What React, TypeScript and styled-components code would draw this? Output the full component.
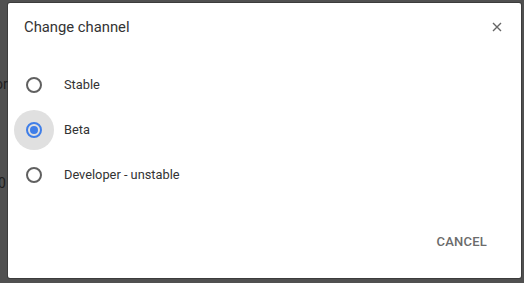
import React from "react";
import styled, { createGlobalStyle } from "styled-components";

const Global = createGlobalStyle`
  html, body { margin: 0; padding: 0; }
  body {
    background: #505050;
    font-family: Roboto, "Liberation Sans", sans-serif;
    width: 524px;
    height: 283px;
    overflow: hidden;
  }
`;

const Stage = styled.div`
  position: relative;
  width: 524px;
  height: 283px;
  padding: 3px 3px 5px 8px;
  box-sizing: border-box;
`;

const Backdrop = styled.span<{ $top: number; $left: number }>`
  position: absolute;
  top: ${(p) => p.$top}px;
  left: ${(p) => p.$left}px;
  font-size: 14px;
  color: #1e1e1e;
  line-height: 1;
`;

const Dialog = styled.div`
  position: relative;
  height: 100%;
  background: #fff;
  border-radius: 2px;
  box-shadow: 0 0 0 1px rgba(0, 0, 0, 0.25);
  display: flex;
  flex-direction: column;
  box-sizing: border-box;
`;

const Header = styled.div`
  display: flex;
  align-items: center;
  justify-content: space-between;
  padding: 14px 18px 0 16px;
  height: 20px;
`;

const Title = styled.h1`
  margin: 0;
  font-size: 14.8px;
  font-weight: 400;
  color: #333;
  line-height: 20px;
`;

const Close = styled.button`
  border: 0;
  background: none;
  padding: 0;
  width: 12px;
  height: 12px;
  display: flex;
  align-items: center;
  justify-content: center;
  cursor: pointer;
`;

const List = styled.div`
  display: flex;
  flex-direction: column;
  padding: 25px 0 0 6px;
`;

const Row = styled.label`
  display: flex;
  align-items: center;
  height: 45px;
  gap: 10px;
`;

const RadioWrap = styled.span<{ $focus?: boolean }>`
  width: 40px;
  height: 40px;
  border-radius: 50%;
  display: flex;
  align-items: center;
  justify-content: center;
  background: ${(p) => (p.$focus ? "#e0e0e0" : "transparent")};
`;

const Radio = styled.span<{ $on?: boolean }>`
  width: 16px;
  height: 16px;
  box-sizing: border-box;
  border-radius: 50%;
  border: 2px solid ${(p) => (p.$on ? "#3f7ee8" : "#606060")};
  display: flex;
  align-items: center;
  justify-content: center;
  &::after {
    content: "";
    width: 8px;
    height: 8px;
    border-radius: 50%;
    background: #3f7ee8;
    display: ${(p) => (p.$on ? "block" : "none")};
  }
`;

const Label = styled.span`
  font-size: 12.8px;
  color: #333;
`;

const Footer = styled.div`
  margin-top: auto;
  display: flex;
  justify-content: flex-end;
  padding: 0 34px 28px 0;
`;

const TextButton = styled.button`
  border: 0;
  background: none;
  padding: 0;
  font-family: Roboto, "Liberation Sans", sans-serif;
  font-size: 13px;
  font-weight: 500;
  color: #6b6b6b;
  text-transform: uppercase;
  letter-spacing: 0.2px;
  line-height: 16px;
  cursor: pointer;
`;

const options = [
  { label: "Stable", on: false },
  { label: "Beta", on: true },
  { label: "Developer - unstable", on: false },
];

export default function App() {
  return (
    <>
      <Global />
      <Stage>
        <Backdrop $top={77} $left={-5}>or</Backdrop>
        <Backdrop $top={176} $left={-2}>0</Backdrop>
        <Dialog>
          <Header>
            <Title>Change channel</Title>
            <Close aria-label="Close">
              <svg width="10" height="10" viewBox="0 0 10 10">
                <path d="M1 1L9 9M9 1L1 9" stroke="#666" strokeWidth="1.4" />
              </svg>
            </Close>
          </Header>
          <List>
            {options.map((o) => (
              <Row key={o.label}>
                <RadioWrap $focus={o.on}>
                  <Radio $on={o.on} />
                </RadioWrap>
                <Label>{o.label}</Label>
              </Row>
            ))}
          </List>
          <Footer>
            <TextButton>Cancel</TextButton>
          </Footer>
        </Dialog>
      </Stage>
    </>
  );
}
